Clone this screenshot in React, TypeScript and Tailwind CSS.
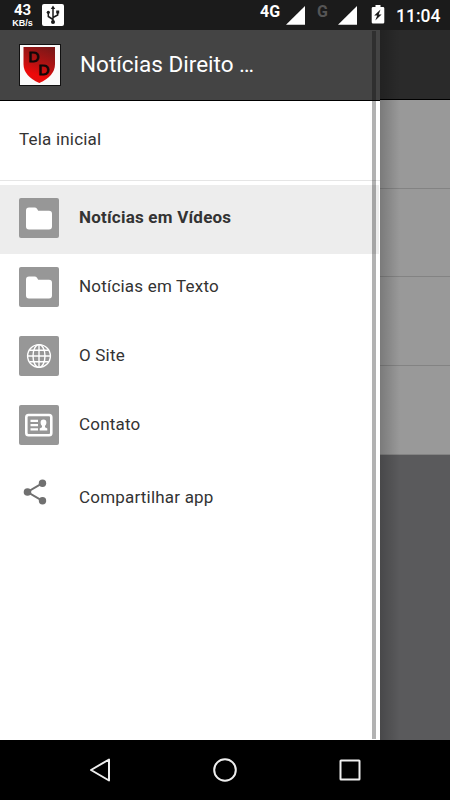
import type { ReactNode } from 'react'

interface MenuItem {
  label: string
  icon: ReactNode
  active?: boolean
}

function FolderIcon() {
  return (
    <svg width="40" height="40" viewBox="0 0 40 40" fill="#fff">
      <path d="M10 9.5h5.6q1.6 0 2.4 1.3l1.2 1.9H30q3 0 3 3v12.700q0 3-3 3H10q-3 0-3-3V12.500q0-3 3-3Z" />
    </svg>
  )
}

function GlobeIcon() {
  return (
    <svg width="40" height="40" viewBox="0 0 40 40" fill="none" stroke="#fff" strokeWidth="1.4">
      <circle cx="20" cy="20" r="11.400" />
      <ellipse cx="20" cy="20" rx="6" ry="11.400" />
      <path d="M20 8.600v22.800M8.600 20h22.800M10.500 14.200h19M10.500 25.800h19" />
    </svg>
  )
}

function ContactIcon() {
  return (
    <svg width="40" height="40" viewBox="0 0 40 40">
      <rect x="7.300" y="10" width="25" height="20.200" rx="2.200" fill="none" stroke="#fff" strokeWidth="2.600" />
      <path d="M11.500 15.900h7.500M11.500 20.100h7.500M11.500 24.300h7.500" stroke="#fff" strokeWidth="2.200" />
      <path
        d="M24.500 14.500c1.900 0 2.900 1.200 2.900 3 0 1.400-.6 2.600-1.400 3.200v1.600l2.300 1.100v2h-7.600v-2l2.300-1.100v-1.600c-.8-.6-1.400-1.800-1.400-3.200 0-1.800 1-3 2.900-3Z"
        fill="#fff"
      />
    </svg>
  )
}

function ShareIcon() {
  return (
    <svg width="24" height="26" viewBox="0 0 24 26" fill="#707070">
      <path d="M19.500 4.200 4.500 13l15 8.800" fill="none" stroke="#707070" strokeWidth="2" />
      <circle cx="19.500" cy="4.200" r="3.700" />
      <circle cx="4.500" cy="13" r="3.800" />
      <circle cx="19.500" cy="21.800" r="3.700" />
    </svg>
  )
}

function UsbIcon() {
  return (
    <svg width="22" height="22" viewBox="0 0 22 22" fill="#1b1b1b">
      <path d="M11 18V4M11 15.500 6.300 12.500V8M11 13.500l4.700-2.500V7" fill="none" stroke="#1b1b1b" strokeWidth="1.500" />
      <path d="m11 1.500 2.200 3.500H8.800Z" />
      <circle cx="11" cy="18" r="2" />
      <circle cx="6.300" cy="8.300" r="1.600" />
      <path d="M14.200 6.500h3v3h-3z" />
    </svg>
  )
}

function SignalIcon() {
  return (
    <svg width="20" height="19" viewBox="0 0 20 19">
      <path d="M19 0v18.700H0Z" fill="#fff" />
    </svg>
  )
}

function BatteryIcon() {
  return (
    <svg width="14" height="19" viewBox="0 0 14 19">
      <path d="M4.500 0h5v2H12q1.300 0 1.300 1.300v13.900q0 1.300-1.300 1.300H2q-1.300 0-1.300-1.300V3.300Q.7 2 2 2h2.500Z" fill="#fff" />
      <path d="m9.500 4.500-6.300 6h3L4.300 15.500l6.300-6H7.700Z" fill="#1b1b1b" />
    </svg>
  )
}

function Logo() {
  return (
    <svg width="42" height="42" viewBox="0 0 42 42">
      <defs>
        <linearGradient id="shield" x1="0.700" y1="0" x2="0.350" y2="1">
          <stop offset="0" stopColor="#7d1717" />
          <stop offset="0.500" stopColor="#b81212" />
          <stop offset="0.800" stopColor="#ef0909" />
          <stop offset="1" stopColor="#d91212" />
        </linearGradient>
      </defs>
      <rect width="42" height="42" fill="#111" />
      <rect x="1" y="1" width="40" height="40" fill="#fafafa" />
      <path d="M4.500 3h31.500v17q0 12-15.700 19Q4.500 32 4.500 20Z" fill="url(#shield)" />
      <g fill="#100707" fontFamily="Liberation Sans, sans-serif" fontSize="15.500" stroke="#100707" strokeWidth="0.900">
        <text x="9.300" y="17.800">D</text>
        <text x="19.300" y="30.500">D</text>
      </g>
    </svg>
  )
}

const items: MenuItem[] = [
  { label: 'Notícias em Vídeos', icon: <FolderIcon />, active: true },
  { label: 'Notícias em Texto', icon: <FolderIcon /> },
  { label: 'O Site', icon: <GlobeIcon /> },
  { label: 'Contato', icon: <ContactIcon /> },
]

function StatusBar() {
  return (
    <div className="flex h-[30px] items-start bg-[#1b1b1b] text-white">
      <div className="flex w-[42px] flex-col items-center pt-[3px] pl-[3px]">
        <span className="text-[15px] leading-[15px] font-bold">43</span>
        <span className="font-['Liberation_Sans'] text-[9px] leading-[10px] font-bold">KB/s</span>
      </div>
      <div className="mt-[4px] rounded-[2px] bg-white">
        <UsbIcon />
      </div>
      <div className="ml-auto flex">
        <span className="w-[26px] pt-[2px] text-[16px] leading-[19px] font-bold">4G</span>
        <div className="w-[31px] pt-[6px]">
          <SignalIcon />
        </div>
        <span className="w-[21px] pt-[2px] text-[16px] leading-[19px] font-bold text-[#555]">G</span>
        <div className="w-[33px] pt-[6px]">
          <SignalIcon />
        </div>
        <div className="w-[25px] pt-[5px]">
          <BatteryIcon />
        </div>
        <span className="w-[54px] pt-[6px] text-[17.5px] leading-[20px] font-medium">11:04</span>
      </div>
    </div>
  )
}

function Drawer() {
  return (
    <div className="relative flex w-[380px] flex-col bg-white text-[#333]">
      <div className="flex h-[71px] items-center border-b border-black bg-[#444] pl-[19px] text-white">
        <Logo />
        <span className="ml-[19px] pb-[3px] text-[22.5px] leading-[30px]">Notícias Direito …</span>
      </div>
      <div className="flex h-[80px] items-center border-b border-[#e5e5e5] pb-[2px] pl-[19px] text-[17px] tracking-[0.2px]">
        Tela inicial
      </div>
      <div className="pt-[4px] pr-px">
        {items.map((item) => (
          <div
            key={item.label}
            className={`flex h-[69px] items-center pb-[3px] pl-[19px] text-[17px] ${item.active ? 'bg-[#ededed] font-bold tracking-[0.22px]' : 'tracking-[0.2px]'}`}
          >
            <div className="rounded-[2px] bg-[#979797]">{item.icon}</div>
            <span className="ml-[20px]">{item.label}</span>
          </div>
        ))}
        <div className="flex pt-[18px] pl-[23px] text-[17px] tracking-[0.2px]">
          <ShareIcon />
          <span className="ml-[32px] pt-[6px]">Compartilhar app</span>
        </div>
      </div>
      <div className="absolute top-px right-[4px] bottom-px w-[4px] bg-black/30" />
    </div>
  )
}

function Backdrop() {
  return (
    <div className="relative flex flex-1 flex-col bg-[#5a5a5c]">
      <div className="h-[70px] border-b border-black bg-[#2a2a2a]" />
      <div className="h-[89px] border-b border-[#838383] bg-[#999]" />
      <div className="h-[88px] border-b border-[#838383] bg-[#999]" />
      <div className="h-[89px] border-b border-[#838383] bg-[#999]" />
      <div className="h-[89px] border-b border-[#838383] bg-[#999]" />
      <div className="absolute inset-y-0 left-0 w-[20px] bg-linear-to-r from-black/20 to-transparent" />
    </div>
  )
}

function NavBar() {
  return (
    <div className="flex h-[60px] items-center justify-between bg-black px-[87px]">
      <svg width="26" height="26" viewBox="0 0 26 26" fill="none" stroke="#eee" strokeWidth="2" strokeLinejoin="round">
        <path d="M22 2.500v21L4 13Z" />
      </svg>
      <svg width="26" height="26" viewBox="0 0 26 26" fill="none" stroke="#eee" strokeWidth="2">
        <circle cx="13" cy="13" r="10.800" />
      </svg>
      <svg width="26" height="26" viewBox="0 0 26 26" fill="none" stroke="#eee" strokeWidth="2">
        <rect x="3.500" y="3.500" width="19" height="19" rx="0.500" />
      </svg>
    </div>
  )
}

export default function App() {
  return (
    <div className="flex h-[800px] w-[450px] flex-col overflow-hidden font-['Roboto',sans-serif]">
      <StatusBar />
      <div className="flex flex-1">
        <Drawer />
        <Backdrop />
      </div>
      <NavBar />
    </div>
  )
}
